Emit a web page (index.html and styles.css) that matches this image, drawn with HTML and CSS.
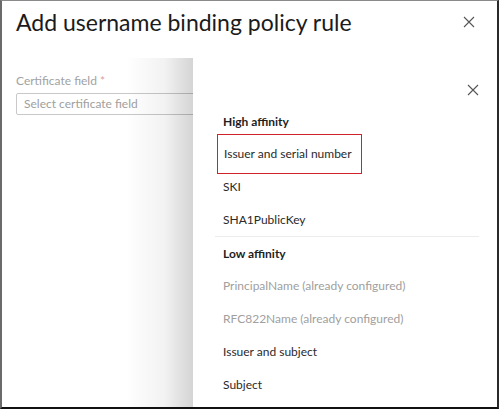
FILE: index.html
```html
<!DOCTYPE html>
<html>
<head>
<meta charset="utf-8">
<link rel="stylesheet" href="styles.css">
</head>
<body>
<div class="frame">
  <div class="dialog">
    <div class="dialog-head">
      <h1 class="title">Add username binding policy rule</h1>
      <span class="close close-main">
        <svg width="12" height="12" viewBox="0 0 12 12"><path d="M1 1L11 11M11 1L1 11" stroke="#555" stroke-width="1.1" fill="none"/></svg>
      </span>
    </div>
    <div class="field">
      <div class="label">Certificate field <span class="req">*</span></div>
      <div class="input">Select certificate field</div>
    </div>
  </div>
  <div class="shade"></div>
  <div class="panel">
    <div class="panel-head">
      <span class="close">
        <svg width="12" height="12" viewBox="0 0 12 12"><path d="M1 1L11 11M11 1L1 11" stroke="#555" stroke-width="1.1" fill="none"/></svg>
      </span>
    </div>
    <div class="group">
      <div class="group-title">High affinity</div>
      <div class="item selected">Issuer and serial number</div>
      <div class="item">SKI</div>
      <div class="item">SHA1PublicKey</div>
    </div>
    <div class="group group-2">
      <div class="group-title">Low affinity</div>
      <div class="item disabled">PrincipalName (already configured)</div>
      <div class="item disabled">RFC822Name (already configured)</div>
      <div class="item">Issuer and subject</div>
      <div class="item">Subject</div>
    </div>
  </div>
</div>
</body>
</html>
```

FILE: styles.css
```css
* { box-sizing: border-box; }
html, body { margin: 0; padding: 0; background: #fff; }
body { font-family: Lato, "Noto Sans", sans-serif; color: #222; }
.frame {
  position: relative;
  width: 499px;
  height: 409px;
  overflow: hidden;
  border-top: 1px solid #8a8a8a;
  border-left: 2px solid #6a6a6a;
  border-right: 2px solid #2a2a2a;
  border-bottom: 2px solid #111;
  background: #fff;
}
.dialog { padding: 0 0 0 14px; }
.dialog-head {
  display: flex;
  align-items: center;
  justify-content: space-between;
  height: 42px;
  padding-right: 22px;
}
.title {
  margin: 0;
  font-weight: 400;
  font-size: 23px;
  color: #1b1b1b;
}
.close { display: flex; width: 12px; height: 12px; }
.field { margin-top: 30px; width: 200px; }
.label { font-size: 12px; color: #a2a2a2; line-height: 16px; }
.req { color: #e0a0a0; }
.input {
  margin-top: 4px;
  height: 22px;
  border: 1px solid #c8c8c8;
  border-radius: 2px;
  font-size: 12px;
  line-height: 20px;
  padding-left: 7px;
  color: #a0a0a0;
}
.shade {
  position: absolute;
  left: 0;
  width: 191px;
  top: 57px;
  bottom: 0;
  background: linear-gradient(to right, rgba(0,0,0,0) 0, rgba(0,0,0,0) 65%, rgba(0,0,0,0.05) 85%, rgba(0,0,0,0.17) 100%);
}
.panel {
  position: absolute;
  left: 191px;
  top: 57px;
  right: 0;
  bottom: 0;
  background: #fff;
  padding: 0 18px 0 22px;
}
.panel-head {
  display: flex;
  justify-content: flex-end;
  padding-top: 26px;
  height: 51px;
}
.group-title {
  font-weight: 700;
  font-size: 12px;
  padding-left: 8px;
  height: 26px;
  line-height: 26px;
  margin-bottom: 2px;
  color: #1e1e1e;
}
.item {
  font-size: 12px;
  color: #2a2a2a;
  padding-left: 8px;
  height: 33px;
  line-height: 33px;
  white-space: nowrap;
}
.item.selected {
  margin-top: -3px;
  margin-bottom: -4px;
  height: 40px;
  line-height: 38px;
  width: fit-content;
  margin-left: 2px;
  padding: 0 9px 0 6px;
  border: 1px solid #d1222b;
}
.item.disabled { color: #a0a0a0; }
.group-2 { border-top: 1px solid #ececec; padding-top: 4px; }
```
